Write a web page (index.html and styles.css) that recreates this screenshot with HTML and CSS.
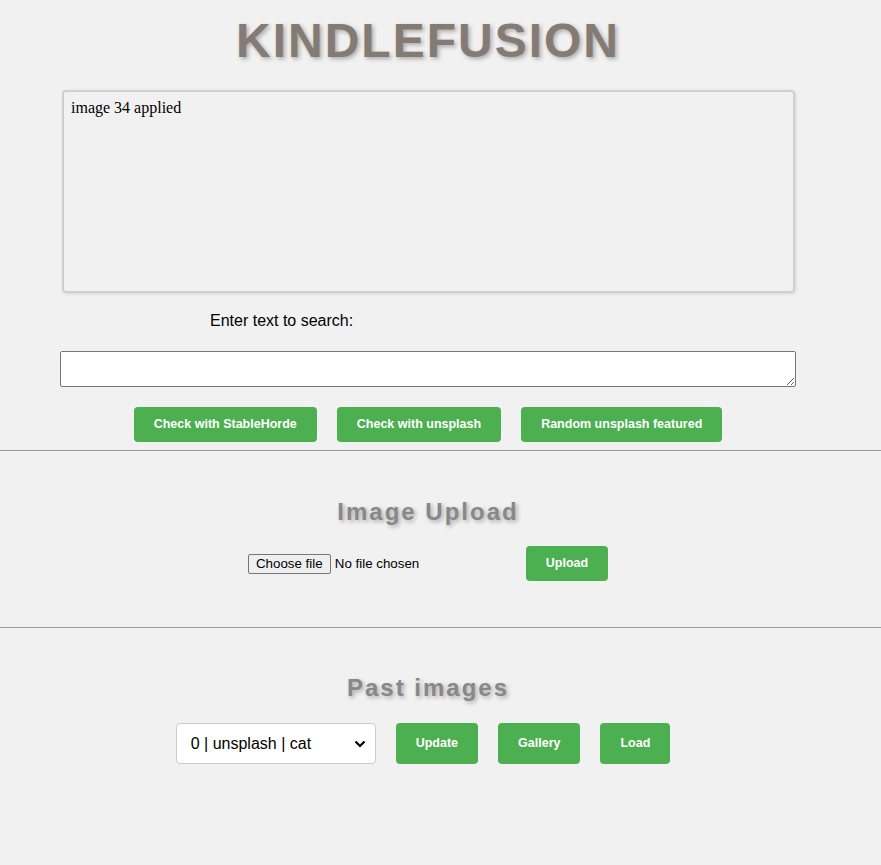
FILE: index.html
```html
<!DOCTYPE html>
<html lang="en">
<head>
<meta charset="utf-8">
<title>KindleFusion</title>
<link rel="stylesheet" href="styles.css">
</head>
<body>
<header class="top">
  <h1 class="title">KINDLEFUSION</h1>
  <div class="status">image 34 applied</div>
  <label class="search-label" for="q">Enter text to search:</label>
  <textarea id="q" class="search-input"></textarea>
  <div class="btn-row">
    <button class="btn">Check with StableHorde</button>
    <button class="btn">Check with unsplash</button>
    <button class="btn">Random unsplash featured</button>
  </div>
</header>
<hr class="rule">
<section class="section upload">
  <h2 class="heading">Image Upload</h2>
  <div class="upload-row">
    <label class="file">
      <input type="file" class="file-input">
      <span class="file-btn">Choose file</span>
      <span class="file-name">No file chosen</span>
    </label>
    <button class="btn">Upload</button>
  </div>
</section>
<hr class="rule">
<section class="section past">
  <h2 class="heading">Past images</h2>
  <div class="past-row">
    <div class="select-wrap">
      <select class="select">
        <option>0 | unsplash | cat</option>
      </select>
      <svg class="chev" width="12" height="8" viewBox="0 0 12 8"><path d="M1.5 1.5 L6 6 L10.5 1.5" fill="none" stroke="#000" stroke-width="2.2"/></svg>
    </div>
    <button class="btn tall">Update</button>
    <button class="btn tall">Gallery</button>
    <button class="btn tall">Load</button>
  </div>
</section>
</body>
</html>
```
FILE: styles.css
```css
html, body {
  margin: 0;
  padding: 0;
  background: #f1f1f1;
}
body {
  font-family: "Liberation Sans", Arial, sans-serif;
  color: #000;
  height: 865px;
  overflow: hidden;
}
.top {
  width: 736px;
  margin-left: 60px;
  display: flex;
  flex-direction: column;
}
.title {
  margin: 13px 0 0;
  font-size: 48px;
  line-height: 55px;
  font-weight: bold;
  letter-spacing: 2px;
  color: #857b75;
  text-align: center;
  text-shadow: 2px 2px 4px rgba(0, 0, 0, 0.3);
}
.status {
  margin: 22px 1px 0 2px;
  height: 203px;
  box-sizing: border-box;
  border: 2px solid #cfcfcf;
  border-radius: 4px;
  box-shadow: 1px 1px 3px rgba(0, 0, 0, 0.12);
  padding: 7px 7px;
  font-family: "Liberation Serif", "Times New Roman", serif;
  font-size: 16px;
  line-height: 18px;
}
.search-label {
  margin: 19px 0 0 150px;
  font-size: 16px;
  line-height: 18px;
}
.search-input {
  margin: 21px 0 0;
  width: 736px;
  height: 36px;
  box-sizing: border-box;
  border: 1px solid #767676;
  border-radius: 2px;
  background: #fff;
  resize: vertical;
  padding: 2px;
  font-family: "Liberation Mono", monospace;
  font-size: 13px;
}
.btn-row {
  margin-top: 20px;
  display: flex;
  justify-content: center;
  gap: 20px;
}
.btn {
  background: #4caf50;
  color: #fff;
  border: 0;
  border-radius: 4px;
  padding: 10px 20px;
  font-family: "Liberation Sans", Arial, sans-serif;
  font-size: 12.5px;
  line-height: 15px;
  font-weight: bold;
  height: 35px;
  box-sizing: border-box;
  cursor: pointer;
}
.rule {
  margin: 8px 0 0;
  border: 0;
  border-top: 1px solid #9a9a9a;
  height: 0;
}
.section {
  width: 856px;
  display: flex;
  flex-direction: column;
  align-items: center;
}
.heading {
  margin: 46px 0 0;
  font-size: 24px;
  line-height: 28px;
  font-weight: bold;
  letter-spacing: 2px;
  color: #888;
  text-shadow: 2px 2px 4px rgba(0, 0, 0, 0.3);
}
.upload .heading { margin-top: 47px; }
.upload-row {
  margin-top: 20px;
  display: flex;
  align-items: center;
  gap: 25px;
  margin-bottom: 38px;
}
.file {
  width: 253px;
  display: flex;
  align-items: center;
  font-family: "Liberation Sans", Arial, sans-serif;
  font-size: 13.33px;
  color: #000;
  cursor: pointer;
}
.file-input {
  display: none;
}
.file-btn {
  box-sizing: border-box;
  height: 20px;
  width: 83px;
  text-align: center;
  line-height: 18px;
  background: #efefef;
  border: 1px solid #767676;
  border-radius: 2px;
  font-size: 13.33px;
  margin-right: 4px;
}
.file-name {
  font-size: 13.33px;
}
.past-row {
  margin-top: 21px;
  margin-right: 10px;
  display: flex;
  gap: 20px;
  height: 41px;
}
.btn.tall {
  height: 41px;
  padding: 13px 20px;
}
.select-wrap {
  position: relative;
  width: 200px;
  height: 41px;
}
.select {
  appearance: none;
  -webkit-appearance: none;
  width: 200px;
  height: 41px;
  box-sizing: border-box;
  border: 1px solid #ccc;
  border-radius: 4px;
  background: #fff;
  padding: 0 14px;
  font-family: "Liberation Sans", Arial, sans-serif;
  font-size: 16px;
  color: #000;
}
.chev {
  position: absolute;
  top: 17px;
  right: 10px;
  pointer-events: none;
}
```
